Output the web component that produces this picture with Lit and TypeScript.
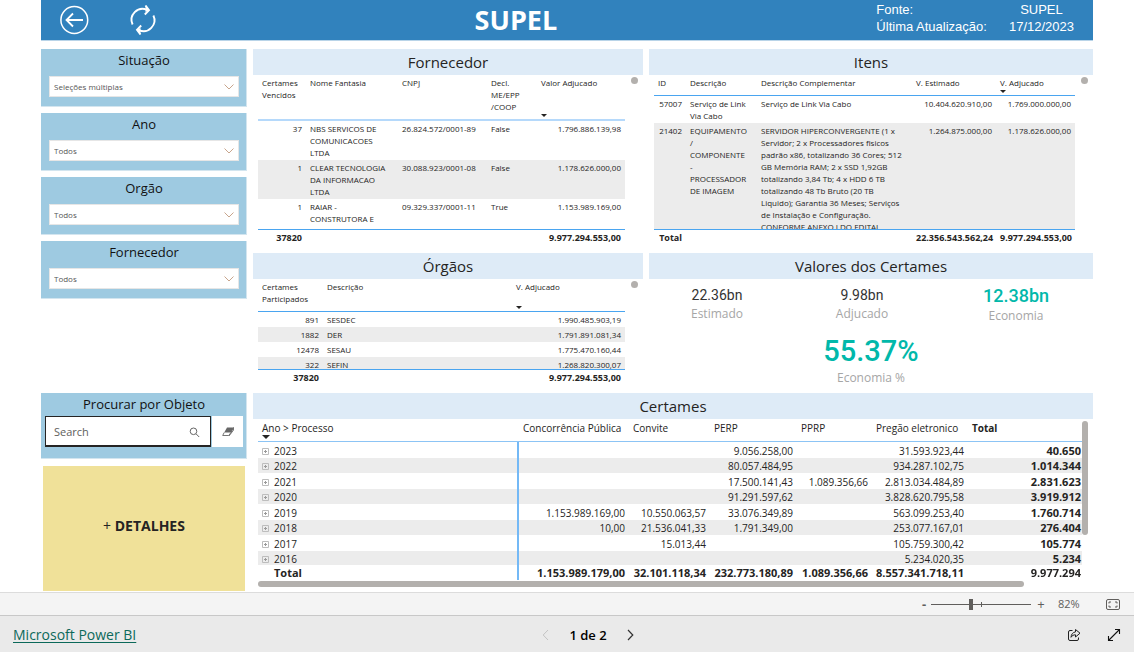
import { LitElement, html, css, nothing } from "lit";
import { customElement } from "lit/decorators.js";
import { classMap } from "lit/directives/class-map.js";

interface Column {
  label: string;
  width: number;
  num?: boolean;
  sorted?: boolean;
}

interface TableSpec {
  name: string;
  columns: Column[];
  rows: string[][];
  total: string[];
}

const suppliers: TableSpec = {
  name: "suppliers",
  columns: [
    { label: "Certames Vencidos", width: 48, num: true },
    { label: "Nome Fantasia", width: 92 },
    { label: "CNPJ", width: 89 },
    { label: "Decl. ME/EPP /COOP", width: 50 },
    { label: "Valor Adjucado", width: 88, num: true, sorted: true },
  ],
  rows: [
    ["37", "NBS SERVICOS DE COMUNICACOES LTDA", "26.824.572/0001-89", "False", "1.796.886.139,98"],
    ["1", "CLEAR TECNOLOGIA DA INFORMACAO LTDA", "30.088.923/0001-08", "False", "1.178.626.000,00"],
    ["1", "RAIAR - CONSTRUTORA E", "09.329.337/0001-11", "True", "1.153.989.169,00"],
  ],
  total: ["37820", "", "", "", "9.977.294.553,00"],
};

const items: TableSpec = {
  name: "items",
  columns: [
    { label: "ID", width: 32, num: true },
    { label: "Descrição", width: 71 },
    { label: "Descrição Complementar", width: 155 },
    { label: "V. Estimado", width: 84, num: true },
    { label: "V. Adjucado", width: 79, num: true, sorted: true },
  ],
  rows: [
    ["57007", "Serviço de Link Via Cabo", "Serviço de Link Via Cabo", "10.404.620.910,00", "1.769.000.000,00"],
    [
      "21402",
      "EQUIPAMENTO\n/\nCOMPONENTE\n-\nPROCESSADOR\nDE IMAGEM",
      "SERVIDOR HIPERCONVERGENTE (1 x\nServidor; 2 x Processadores fisicos\npadrão x86, totalizando 36 Cores; 512\nGB Memória RAM; 2 x SSD 1,92GB\ntotalizando 3,84 Tb; 4 x HDD 6 TB\ntotalizando 48 Tb Bruto (20 TB\nLiquido); Garantia 36 Meses; Serviços\nde Instalação e Configuração.\nCONFORME ANEXO I DO EDITAL",
      "1.264.875.000,00",
      "1.178.626.000,00",
    ],
  ],
  total: ["Total", "", "", "22.356.543.562,24", "9.977.294.553,00"],
};

const agencies: TableSpec = {
  name: "agencies",
  columns: [
    { label: "Certames Participados", width: 65, num: true },
    { label: "Descrição", width: 189 },
    { label: "V. Adjucado", width: 113, num: true, sorted: true },
  ],
  rows: [
    ["891", "SESDEC", "1.990.485.903,19"],
    ["1882", "DER", "1.791.891.081,34"],
    ["12478", "SESAU", "1.775.470.160,44"],
    ["322", "SEFIN", "1.268.820.300,07"],
  ],
  total: ["37820", "", "9.977.294.553,00"],
};

const tenders: TableSpec = {
  name: "tenders",
  columns: [
    { label: "Ano > Processo", width: 261, sorted: true },
    { label: "Concorrência Pública", width: 110, num: true },
    { label: "Convite", width: 81, num: true },
    { label: "PERP", width: 87, num: true },
    { label: "PPRP", width: 75, num: true },
    { label: "Pregão eletronico", width: 96, num: true },
    { label: "Total", width: 114, num: true },
  ],
  rows: [
    ["2023", "", "", "9.056.258,00", "", "31.593.923,44", "40.650"],
    ["2022", "", "", "80.057.484,95", "", "934.287.102,75", "1.014.344"],
    ["2021", "", "", "17.500.141,43", "1.089.356,66", "2.813.034.484,89", "2.831.623"],
    ["2020", "", "", "91.291.597,62", "", "3.828.620.795,58", "3.919.912"],
    ["2019", "1.153.989.169,00", "10.550.063,57", "33.076.349,89", "", "563.099.253,40", "1.760.714"],
    ["2018", "10,00", "21.536.041,33", "1.791.349,00", "", "253.077.167,01", "276.404"],
    ["2017", "", "15.013,44", "", "", "105.759.300,42", "105.774"],
    ["2016", "", "", "", "", "5.234.020,35", "5.234"],
  ],
  total: ["Total", "1.153.989.179,00", "32.101.118,34", "232.773.180,89", "1.089.356,66", "8.557.341.718,11", "9.977.294"],
};

const slicers = [
  { id: "situacao", label: "Situação", value: "Seleções múltiplas" },
  { id: "ano", label: "Ano", value: "Todos" },
  { id: "orgao", label: "Orgão", value: "Todos" },
  { id: "fornecedor", label: "Fornecedor", value: "Todos" },
];

const kpis = [
  { value: "22.36bn", label: "Estimado", kind: "plain" },
  { value: "9.98bn", label: "Adjucado", kind: "plain" },
  { value: "12.38bn", label: "Economia", kind: "accent" },
  { value: "55.37%", label: "Economia %", kind: "hero" },
];

const expandIcon = html`<svg class="expand" viewBox="0 0 7 7" aria-hidden="true">
  <path d="M.5.5h6v6h-6z" fill="none" stroke="#bdbdbd" />
  <path d="M2 3.500h3M3.500 2v3" fill="none" stroke="#9a9a9a" />
</svg>`;

@customElement("app-root")
export class AppRoot extends LitElement {
  static styles = css`
    :host {
      display: flex;
      flex-direction: column;
      height: 100vh;
      overflow: hidden;
      background: #fff;
      color: #252423;
      font-family: "Open Sans", "Noto Sans", sans-serif;
      font-size: 8px;
      line-height: 12px;
    }
    * {
      box-sizing: border-box;
    }
    button,
    input,
    select {
      margin: 0;
      padding: 0;
      border: 0;
      border-radius: 0;
      background: none;
      color: inherit;
      font: inherit;
    }
    button {
      display: grid;
      place-items: center;
      cursor: pointer;
    }
    svg {
      display: block;
    }
    h1,
    h2,
    p,
    dl,
    dd {
      margin: 0;
      font-weight: 400;
    }
    .report {
      flex: 1;
      min-height: 0;
      display: flex;
      flex-direction: column;
      gap: 8px;
      margin: 0 41px 1px;
    }
    .banner {
      display: grid;
      grid-template-columns: 433fr auto 535fr;
      align-items: center;
      height: 41px;
      background: #3182bd;
      border-bottom: 1px solid #b9d4e8;
      color: #fff;
    }
    .banner-actions {
      display: flex;
      gap: 39px;
      padding-left: 18px;
    }
    .banner-actions svg {
      width: 30px;
      height: 30px;
    }
    .banner h1 {
      font-size: 27px;
      line-height: 40px;
      font-weight: 700;
    }
    .source {
      justify-self: end;
      display: grid;
      grid-template-columns: auto auto;
      column-gap: 22px;
      padding: 0 19px 4px 0;
      font-family: "Liberation Sans", Arial, sans-serif;
      font-size: 13px;
      line-height: 17px;
    }
    .source dd {
      text-align: center;
    }
    .board {
      flex: 1;
      min-height: 0;
      display: grid;
      grid-template-columns: 206px minmax(0, 390fr) minmax(0, 444fr);
      grid-template-rows: minmax(0, 198fr) minmax(0, 134fr) minmax(0, 198fr);
      gap: 6px;
    }
    .filters {
      grid-row: 1 / 3;
      display: flex;
      flex-direction: column;
      gap: 6px;
    }
    .tools {
      display: flex;
      flex-direction: column;
      gap: 7px;
    }
    .slicer,
    .finder {
      background: #9ecae1;
      border: solid #d3e5ef;
      border-width: 0 1px 1px 0;
    }
    .slicer {
      display: flex;
      flex-direction: column;
      gap: 5px;
      padding: 0 7px 9px 8px;
    }
    .slicer label,
    .finder label {
      font-size: 13px;
      line-height: 22px;
      text-align: center;
      color: #111;
    }
    .picker {
      display: grid;
      grid-template-columns: 1fr 10px;
      align-items: center;
      background: #fff;
      border: 1px solid #e6e6e6;
    }
    .picker select {
      grid-area: 1 / 1 / 2 / 3;
      appearance: none;
      height: 19px;
      padding: 0 18px 0 4px;
      color: #555;
    }
    .picker svg {
      grid-area: 1 / 2;
      width: 10px;
      height: 6px;
      margin-left: -4px;
      pointer-events: none;
    }
    .finder {
      display: flex;
      flex-direction: column;
      gap: 1px;
      padding: 0 3px 11px 4px;
    }
    .finder-row {
      display: flex;
      gap: 1px;
    }
    .search {
      flex: 1;
      min-width: 0;
      display: flex;
      align-items: center;
      height: 31px;
      padding: 2px 10px 0 8px;
      background: #fff;
      border: 1px solid #252423;
      border-bottom-width: 2px;
    }
    .search input {
      flex: 1;
      min-width: 0;
      font-size: 11px;
      outline: none;
    }
    .search input::placeholder {
      color: #605e5c;
      opacity: 1;
    }
    .erase {
      flex: none;
      width: 31px;
      background: #fff;
    }
    .details {
      flex: 1;
      margin: 0 2px;
      padding-bottom: 6px;
      background: #f0e199;
      font-size: 14px;
      font-weight: 700;
    }
    .details .plus {
      font-weight: 400;
    }
    .panel {
      display: flex;
      flex-direction: column;
      min-width: 0;
      min-height: 0;
    }
    .panel h2 {
      flex: none;
      background: #deebf7;
      font-size: 15px;
      line-height: 26px;
      text-align: center;
    }
    .wide {
      grid-column: 2 / 4;
    }
    .grid {
      flex: 1;
      min-height: 0;
      display: grid;
      grid-template-columns: minmax(0, 1fr) 7px;
      grid-template-rows: minmax(0, 1fr);
      column-gap: 6px;
      padding: 2px 5px;
    }
    .knob {
      width: 7px;
      height: 7px;
      border-radius: 50%;
      background: #b3b0ad;
    }
    .viewport {
      overflow: auto;
      scrollbar-width: none;
    }
    table {
      width: 100%;
      table-layout: fixed;
      border-collapse: separate;
      border-spacing: 0;
    }
    th,
    td {
      padding: 2px 4px 1px;
      text-align: left;
      vertical-align: top;
      font-weight: 400;
      white-space: pre-line;
    }
    thead th {
      position: sticky;
      top: 0;
      padding: 0 4px 6px;
      background: #fff;
      border-bottom: 1px solid #4aa5f0;
    }
    .suppliers thead th {
      border-bottom: 2px solid #b5d9fb;
    }
    .suppliers tbody td {
      height: 39px;
    }
    .sort {
      position: absolute;
      left: 4px;
      bottom: 2px;
      width: 6px;
      height: 3px;
    }
    tbody tr:nth-child(even) > * {
      background: #ececec;
    }
    tbody .num,
    tfoot .num {
      text-align: right;
      white-space: nowrap;
    }
    tfoot > tr > * {
      position: sticky;
      bottom: 0;
      padding: 2px 4px 1px;
      background: #fff;
      border-top: 1px solid #4aa5f0;
      font-size: 9px;
      font-weight: 700;
      white-space: nowrap;
    }
    .matrix {
      grid-template-columns: minmax(0, 1fr) 6px;
      grid-template-rows: minmax(0, 1fr) 6px;
      gap: 1px 0;
      padding: 2px 5px 4px;
    }
    .bar {
      border-radius: 3px;
      background: #b3b0ad;
    }
    .bar.down {
      height: 72%;
    }
    .bar.across {
      width: 93%;
    }
    .tenders {
      font-size: 10px;
      line-height: 14px;
    }
    .tenders thead th {
      border-color: #8cc4f5;
      white-space: nowrap;
    }
    .tenders .sort {
      width: 8px;
      height: 4px;
    }
    .tenders tbody tr > * {
      padding: 1px 4px 0;
    }
    .tenders tbody tr:nth-child(odd) > * {
      padding-top: 2px;
    }
    .tenders tbody th,
    .tenders tfoot th {
      border-right: 2px solid #74b9f6;
    }
    .tenders tr > td:last-child,
    .tenders tr > th:last-child {
      font-weight: 700;
    }
    .tenders tbody td:last-child {
      padding-right: 1px;
      font-size: 11px;
    }
    .tenders tfoot > tr > * {
      padding: 1px 4px 0;
      border-top: 0;
      font-size: 11px;
    }
    .tenders tfoot td:last-child {
      padding-right: 1px;
    }
    .tenders tfoot th {
      padding-left: 16px;
    }
    .year {
      display: flex;
      align-items: center;
      gap: 5px;
    }
    .expand {
      width: 7px;
      height: 7px;
    }
    .kpis {
      display: grid;
      grid-template-columns: 136fr 154fr 154fr;
      row-gap: 8px;
      padding-top: 6px;
      text-align: center;
    }
    .kpi {
      color: #a6a6a6;
      font-size: 12px;
      line-height: 18px;
    }
    .figure {
      color: #333;
      font-family: Roboto, sans-serif;
      font-size: 14px;
      line-height: 20px;
    }
    .accent .figure,
    .hero .figure {
      color: #01b8aa;
      font-weight: 500;
    }
    .accent .figure {
      font-size: 18px;
      line-height: 22px;
    }
    .hero {
      grid-column: 1 / 4;
    }
    .hero .figure {
      font-size: 29px;
      line-height: 36px;
    }
    .zoombar {
      display: flex;
      align-items: center;
      justify-content: flex-end;
      height: 24px;
      padding: 0 14px 0 0;
      background: #f4f4f4;
      border: solid #dcdcdc;
      border-width: 1px 0;
      border-bottom-color: #c8c8c8;
      color: #605e5c;
      font-size: 11px;
    }
    .zoombar button {
      font-size: 13px;
      width: 8px;
      height: 16px;
    }
    .zoombar .minus {
      font-weight: 700;
    }
    .slider {
      appearance: none;
      width: 100px;
      height: 12px;
      margin: 0 6px 0 3px;
      background:
        linear-gradient(#605e5c, #605e5c) 50px 4px / 1px 5px no-repeat,
        linear-gradient(#605e5c, #605e5c) 0 6px / 100% 1px no-repeat;
    }
    .slider::-webkit-slider-thumb {
      appearance: none;
      width: 4px;
      height: 11px;
      background: #605e5c;
    }
    .percent {
      width: 61px;
      padding-left: 13px;
    }
    .zoombar .fit {
      width: 14px;
      height: 12px;
    }
    .statusbar {
      display: grid;
      grid-template-columns: 1fr auto 1fr;
      align-items: center;
      height: 36px;
      padding: 2px 13px 0;
      background: #eaeaea;
      font-size: 14px;
      line-height: 18px;
    }
    .statusbar a {
      justify-self: start;
      color: #0c695a;
      text-underline-offset: 2px;
    }
    .pager {
      display: flex;
      align-items: center;
      gap: 20px;
      padding-left: 42px;
      color: #000;
      font-size: 13px;
      font-weight: 600;
    }
    .share {
      justify-self: end;
      display: flex;
      gap: 26px;
    }
  `;

  private cell(spec: TableSpec, text: string, i: number, total = false) {
    const num = classMap({ num: !!spec.columns[i].num });
    if (spec.name === "tenders" && i === 0) {
      return total
        ? html`<th scope="row">${text}</th>`
        : html`<th scope="row"><span class="year">${expandIcon}${text}</span></th>`;
    }
    return html`<td class=${num}>${text}</td>`;
  }

  private table(spec: TableSpec, label: string) {
    const sum = spec.columns.reduce((a, c) => a + c.width, 0);
    return html`<div class="viewport">
      <table class=${spec.name} aria-label=${label}>
        <colgroup>
          ${spec.columns.map((c) => html`<col style="width:${(c.width / sum) * 100}%" />`)}
        </colgroup>
        <thead>
          <tr>
            ${spec.columns.map(
              (c) => html`<th scope="col">${c.label}${c.sorted
                ? html`<svg class="sort" viewBox="0 0 6 3" aria-hidden="true"><path d="M0 0h6L3 3z" fill="#252423" /></svg>`
                : nothing}</th>`,
            )}
          </tr>
        </thead>
        <tbody>
          ${spec.rows.map((r) => html`<tr>${r.map((t, i) => this.cell(spec, t, i))}</tr>`)}
        </tbody>
        <tfoot>
          <tr>${spec.total.map((t, i) => this.cell(spec, t, i, true))}</tr>
        </tfoot>
      </table>
    </div>`;
  }

  private panel(title: string, spec: TableSpec) {
    return html`<section class="panel">
      <h2>${title}</h2>
      <div class="grid">${this.table(spec, title)}<span class="knob"></span></div>
    </section>`;
  }

  private banner() {
    return html`<header class="banner">
      <div class="banner-actions">
        <button aria-label="Voltar">
          <svg viewBox="0 0 30 30" fill="none" stroke="#fff" stroke-width="1.5">
            <circle cx="15.3" cy="15" r="13.4" />
            <path d="M24 15H7.5M14 8.5 7.5 15l6.500 6.500" stroke-width="1.8" />
          </svg>
        </button>
        <button aria-label="Atualizar">
          <svg viewBox="0 0 30 30" fill="none" stroke="#fff" stroke-width="1.9">
            <path d="M4.600 19.500A11 11 0 0 1 19 4.800M11 25.200A11 11 0 0 0 25.400 10.500" />
            <path d="M17.500 .5 21 5.200 16.800 9.500M12.500 29.500 9 24.800l4.200-4.300" stroke-width="1.9" />
            <path d="M17.500 .5 21 5.200 17.500 7zM12.500 29.500 9 24.800l3.500-1.800z" fill="#fff" stroke="none" />
          </svg>
        </button>
      </div>
      <h1>SUPEL</h1>
      <dl class="source">
        <dt>Fonte:</dt>
        <dd>SUPEL</dd>
        <dt>Última Atualização:</dt>
        <dd>17/12/2023</dd>
      </dl>
    </header>`;
  }

  private slicer(s: { id: string; label: string; value: string }) {
    return html`<div class="slicer">
      <label for=${s.id}>${s.label}</label>
      <div class="picker">
        <select id=${s.id}>
          <option>${s.value}</option>
        </select>
        <svg viewBox="0 0 10 6" fill="none" stroke="#c8a58c"><path d="M.5.5 5 5 9.500.5" /></svg>
      </div>
    </div>`;
  }

  private tools() {
    return html`<div class="tools">
      <div class="finder">
        <label for="objeto">Procurar por Objeto</label>
        <div class="finder-row">
          <div class="search">
            <input id="objeto" type="text" placeholder="Search" />
            <svg width="11" height="11" viewBox="0 0 11 11" fill="none" stroke="#666">
              <circle cx="4.500" cy="4.300" r="3.300" />
              <path d="M7 6.800 10.200 10" />
            </svg>
          </div>
          <button class="erase" aria-label="Limpar">
            <svg width="12" height="10" viewBox="0 0 12 10">
              <path d="M5 .5h6.500L9 5.500H2.200z" fill="#666" />
              <path d="M2.200 5.500 .7 8.500h6L9 5.500l2.500-5v2.600L7 9" fill="none" stroke="#666" stroke-width=".9" />
            </svg>
          </button>
        </div>
      </div>
      <button class="details"><span><span class="plus">+</span> DETALHES</span></button>
    </div>`;
  }

  render() {
    return html`
      <main class="report">
        ${this.banner()}
        <div class="board">
          <div class="filters">${slicers.map((s) => this.slicer(s))}</div>
          ${this.panel("Fornecedor", suppliers)} ${this.panel("Itens", items)}
          ${this.panel("Órgãos", agencies)}
          <section class="panel">
            <h2>Valores dos Certames</h2>
            <div class="kpis">
              ${kpis.map(
                (k) => html`<div class="kpi ${k.kind}">
                  <p class="figure">${k.value}</p>
                  <p>${k.label}</p>
                </div>`,
              )}
            </div>
          </section>
          ${this.tools()}
          <section class="panel wide">
            <h2>Certames</h2>
            <div class="grid matrix">
              ${this.table(tenders, "Certames")}
              <span class="bar down"></span>
              <span class="bar across"></span>
            </div>
          </section>
        </div>
      </main>
      <div class="zoombar">
        <button class="minus" aria-label="Reduzir">-</button>
        <input class="slider" type="range" min="0" max="100" value="40" aria-label="Zoom" />
        <button aria-label="Ampliar">+</button>
        <span class="percent">82%</span>
        <button class="fit" aria-label="Ajustar à página">
          <svg width="14" height="11" viewBox="0 0 14 11" fill="none" stroke="#605e5c">
            <rect x=".5" y=".5" width="13" height="10" rx="1.500" />
            <path d="M3 4.500V3h2M9 3h2v1.500M11 6.500V8H9M5 8H3V6.500" />
          </svg>
        </button>
      </div>
      <footer class="statusbar">
        <a href="#">Microsoft Power BI</a>
        <nav class="pager" aria-label="Páginas">
          <button aria-label="Página anterior" disabled>
            <svg width="7" height="12" viewBox="0 0 7 12" fill="none" stroke="#c4c4c4"><path d="M6 1 1.200 6 6 11" /></svg>
          </button>
          <span>1 de 2</span>
          <button aria-label="Próxima página">
            <svg width="7" height="12" viewBox="0 0 7 12" fill="none" stroke="#333" stroke-width="1.200"><path d="M1 1l4.800 5L1 11" /></svg>
          </button>
        </nav>
        <div class="share">
          <button aria-label="Compartilhar">
            <svg width="14" height="14" viewBox="0 0 14 14" fill="none" stroke="#222" stroke-linejoin="round">
              <path d="M5.500 2.500H3A1.500 1.500 0 0 0 1.500 4v7A1.500 1.500 0 0 0 3 12.500h7a1.500 1.500 0 0 0 1.500-1.500v-1.500" />
              <path d="M8.500 1.500 13 5.200 8.500 9V6.800C6.500 6.800 5 7.600 4 9.300c.2-3 1.800-5 4.500-5.400z" />
            </svg>
          </button>
          <button aria-label="Tela cheia">
            <svg width="14" height="14" viewBox="0 0 14 14" fill="none" stroke="#111" stroke-width="1.100">
              <path d="M1.500 12.500l11-11M8 1.500h4.500V6M1.500 8v4.500H6" />
            </svg>
          </button>
        </div>
      </footer>
    `;
  }
}
